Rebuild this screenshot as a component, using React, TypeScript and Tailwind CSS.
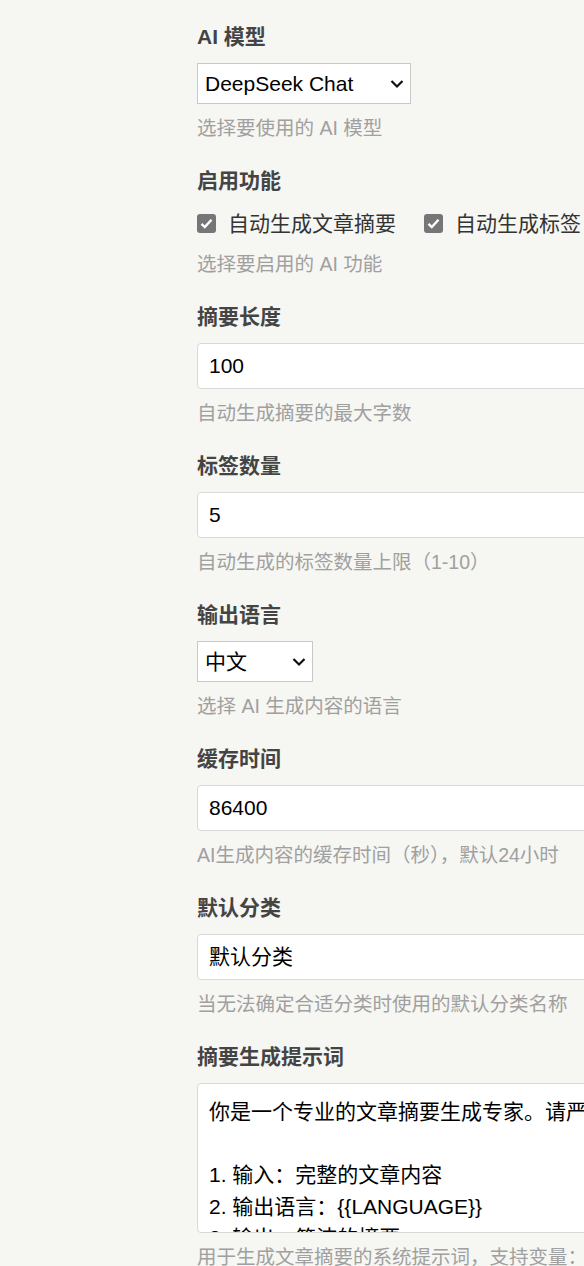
import { ReactNode } from "react";

const font = {
  fontFamily: '"Liberation Sans", "Noto Sans CJK SC", sans-serif',
};

const Chevron = () => (
  <svg
    width="14"
    height="9"
    viewBox="0 0 14 9"
    className="pointer-events-none absolute right-[6px] top-1/2 -translate-y-1/2"
  >
    <path d="M1.5 1.5 L7 7 L12.5 1.5" fill="none" stroke="#111" strokeWidth="2.2" />
  </svg>
);

const Field = ({
  label,
  help,
  children,
}: {
  label: string;
  help: string;
  children: ReactNode;
}) => (
  <div className="mb-[26px]">
    <div className="mb-[12px] text-[21px] font-bold leading-[28px] text-[#444]">
      {label}
    </div>
    {children}
    <div className="mt-[11px] whitespace-nowrap text-[19.5px] leading-[26px] text-[#a0a0a0]">
      {help}
    </div>
  </div>
);

const Select = ({ value, width }: { value: string; width: string }) => (
  <div
    className={`relative flex h-[41px] items-center border border-[#c9c9c9] bg-white pl-[7px] text-[21px] text-black ${width}`}
  >
    {value}
    <Chevron />
  </div>
);

const TextInput = ({ value }: { value: string }) => (
  <div className="flex h-[46px] w-full items-center rounded-[4px] border border-[#d9d9d9] bg-white px-[11px] text-[21px] text-black">
    {value}
  </div>
);

const Check = ({ label }: { label: string }) => (
  <div className="flex items-center gap-[12px]">
    <span className="flex h-[19px] w-[19px] items-center justify-center rounded-[3px] bg-[#767676]">
      <svg width="13" height="11" viewBox="0 0 13 11">
        <path d="M1.5 5.8 L4.8 9 L11.5 1.8" fill="none" stroke="#fff" strokeWidth="2.4" />
      </svg>
    </span>
    <span className="text-[21px] text-[#333]">{label}</span>
  </div>
);

const prompt = `你是一个专业的文章摘要生成专家。请严格按照以下要求生成摘要：

1. 输入：完整的文章内容
2. 输出语言：{{LANGUAGE}}
3. 输出：简洁的摘要
4. 字数限制：不超过 {{LENGTH}} 字`;

export default function App() {
  return (
    <div className="min-h-screen overflow-hidden bg-[#f6f6f2]" style={font}>
      <div className="ml-[197px] w-[720px] pt-[23px]">
        <Field label="AI 模型" help="选择要使用的 AI 模型">
          <Select value="DeepSeek Chat" width="w-[214px]" />
        </Field>
        <Field label="启用功能" help="选择要启用的 AI 功能">
          <div className="flex h-[33px] items-center gap-[28px]">
            <Check label="自动生成文章摘要" />
            <Check label="自动生成标签" />
          </div>
        </Field>
        <Field label="摘要长度" help="自动生成摘要的最大字数">
          <TextInput value="100" />
        </Field>
        <Field label="标签数量" help="自动生成的标签数量上限（1-10）">
          <TextInput value="5" />
        </Field>
        <Field label="输出语言" help="选择 AI 生成内容的语言">
          <Select value="中文" width="w-[116px]" />
        </Field>
        <Field label="缓存时间" help="AI生成内容的缓存时间（秒），默认24小时">
          <TextInput value="86400" />
        </Field>
        <Field label="默认分类" help="当无法确定合适分类时使用的默认分类名称">
          <TextInput value="默认分类" />
        </Field>
        <Field
          label="摘要生成提示词"
          help="用于生成文章摘要的系统提示词，支持变量：{{LANGUAGE}}、{{LENGTH}}"
        >
          <div className="h-[150px] w-full overflow-hidden whitespace-pre-wrap rounded-[4px] border border-[#d9d9d9] bg-white px-[11px] pt-[12px] text-[21px] leading-[31.5px] text-black">
            {prompt}
          </div>
        </Field>
      </div>
    </div>
  );
}
